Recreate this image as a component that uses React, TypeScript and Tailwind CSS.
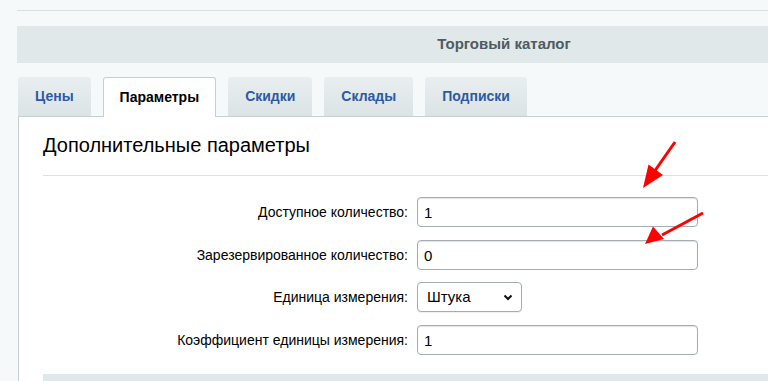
import React from "react";

const tabs = [
  { label: "Цены", active: false },
  { label: "Параметры", active: true },
  { label: "Скидки", active: false },
  { label: "Склады", active: false },
  { label: "Подписки", active: false },
];

const Field = ({ value }: { value: string }) => (
  <input
    readOnly
    value={value}
    className="ml-[4px] h-[30px] w-[281px] rounded-[4px] border border-[#a4adb4] bg-white px-[6px] text-[15px] text-black shadow-[inset_0_1px_1px_rgba(0,0,0,0.12)] outline-none"
  />
);

const Row = ({
  label,
  children,
  className,
}: {
  label: string;
  children: React.ReactNode;
  className?: string;
}) => (
  <div className={`flex items-center ${className ?? ""}`}>
    <div className="w-[370px] pr-[5px] text-right text-[14px] text-black">{label}</div>
    {children}
  </div>
);

export default function App() {
  return (
    <div className="relative h-[381px] w-[768px] overflow-hidden bg-[#f5f9f9] font-['Liberation_Sans',Arial,sans-serif]">
      <div className="w-[991px] pl-[17px]">
        <div className="mt-[10px] h-px bg-[#d8dfe1]" />

        {/* HEADER */}
        <div className="mt-[15px] flex h-[37px] items-center justify-center bg-[#e0e8ea] text-[15px] font-bold text-[#4f5b60]">
          Торговый каталог
        </div>

        {/* TABS */}
        <div className="ml-px mt-[14px] flex items-end gap-[12px]">
          {tabs.map((t) =>
            t.active ? (
              <div
                key={t.label}
                className="relative z-10 -mb-px flex h-[40px] items-center rounded-t-[3px] border border-b-0 border-[#c6d0d3] bg-white px-[16px] text-[14px] font-bold text-black"
              >
                {t.label}
              </div>
            ) : (
              <div
                key={t.label}
                className="flex h-[39px] items-center rounded-t-[3px] bg-gradient-to-b from-[#e9eff0] to-[#dbe3e5] px-[17px] text-[14px] font-bold text-[#2c5aa6]"
              >
                {t.label}
              </div>
            )
          )}
        </div>

        {/* PANEL */}
        <div className="ml-px border-l border-t border-[#c6d0d3] bg-white pl-[24px] pr-[25px]">
          <div className="border-b border-[#dde1e2] pb-[18px] pt-[16px] text-[20px] leading-[24px] text-black">
            Дополнительные параметры
          </div>

          <Row label="Доступное количество:" className="mt-[21px]">
            <Field value="1" />
          </Row>
          <Row label="Зарезервированное количество:" className="mt-[13px]">
            <Field value="0" />
          </Row>
          <Row label="Единица измерения:" className="mt-[12px]">
            <div className="ml-[4px] flex h-[30px] w-[105px] items-center justify-between rounded-[4px] border border-[#a4adb4] bg-white pl-[9px] pr-[8px] text-[15px] text-black shadow-[0_1px_1px_rgba(0,0,0,0.06)]">
              <span>Штука</span>
              <svg width="10" height="7" viewBox="0 0 10 7">
                <path d="M1.5 1.5 L5 5 L8.5 1.5" fill="none" stroke="#111" strokeWidth="2" />
              </svg>
            </div>
          </Row>
          <Row label="Коэффициент единицы измерения:" className="mt-[13px]">
            <Field value="1" />
          </Row>

          <div className="mt-[19px] h-[20px] bg-[#e0e8ea]" />
        </div>
      </div>

      {/* annotation arrows */}
      <svg className="pointer-events-none absolute left-0 top-0" width="768" height="381">
        <line x1="675" y1="142" x2="654" y2="172" stroke="#ff0000" strokeWidth="3" />
        <polygon points="643,188 648.5,164.5 663,175" fill="#ff0000" />
        <line x1="703" y1="213" x2="662" y2="235" stroke="#ff0000" strokeWidth="3" />
        <polygon points="645,244 653,226.5 664,239" fill="#ff0000" />
      </svg>
    </div>
  );
}
